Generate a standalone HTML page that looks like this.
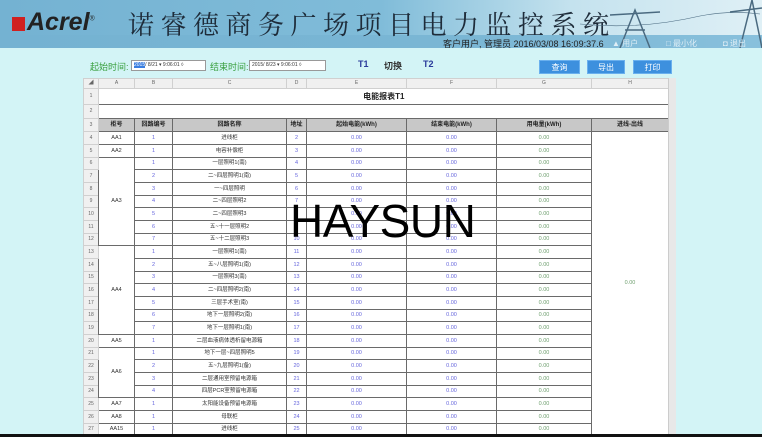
<!DOCTYPE html>
<html><head><meta charset="utf-8"><style>
*{margin:0;padding:0;box-sizing:border-box}
body{width:762px;height:437px;overflow:hidden;background:#d3f4f6;font-family:"Liberation Sans","Noto Sans CJK SC",sans-serif;position:relative}
.hdr{position:absolute;left:0;top:0;width:762px;height:48px;background:linear-gradient(90deg,#74b2d2 0%,#80bcd9 50%,#c4e2ee 75%,#dff0f6 100%)}
.hdr .bot{position:absolute;left:0;top:35px;width:762px;height:13px;background:linear-gradient(90deg,#74b2d2,#7ab6d4 60%,#88c0dc)}
.logo{position:absolute;left:12px;top:8px;font:italic bold 25px "Liberation Sans",sans-serif;color:#222}
.title{position:absolute;left:128px;top:5px;font:26px "Noto Serif CJK SC",serif;color:#1e2c3a;letter-spacing:6.5px;white-space:nowrap}
.user{position:absolute;left:443px;top:37px;font-size:9px;color:#222;white-space:nowrap}
.hl{position:absolute;top:38px;font-size:8px;color:#dfeef6}
.lbl{position:absolute;top:60px;font-size:9px;color:#3aa040}
.inp{position:absolute;top:60px;height:11px;background:#fff;border:1px solid #999;font-size:5px;line-height:9px;color:#333;padding-left:2px}
.t{position:absolute;top:59px;font-size:9px;font-weight:bold;color:#2a3a9a}
.btn{position:absolute;top:60px;height:14px;background:#3d90de;color:#fff;font-size:8px;text-align:center;line-height:14px;border:1px solid #6ab0ee}
.sheet{position:absolute;left:83px;top:78px;width:593px;height:356px;background:#fff;overflow:hidden}
table{border-collapse:collapse;table-layout:fixed;font-size:5.5px;line-height:7px;font-family:"Liberation Sans","Noto Sans CJK SC",sans-serif}
td{text-align:center;overflow:hidden;white-space:nowrap;padding:0;border:1px solid #6a6a6a;color:#333}
td.n{background:#f0f0f0;border:1px solid #d0d0d0;color:#666;font-size:5px}
tr.ch td{background:#f0f0f0;border:1px solid #d0d0d0;color:#666;height:10px;font-size:5px}
tr.h td.c{background:#c8c8c8;font-weight:bold;color:#222;font-size:6px}
tr.a{height:13px}tr.s{height:12px}
.b{color:#6666dd}.g{color:#70a070}
.wm{position:absolute;left:290px;top:194px;font:46px "Liberation Sans",sans-serif;color:#000;letter-spacing:-0.5px}
.sb{position:absolute;left:668px;top:78px;width:8px;height:356px;background:#e8e8e8;border-left:1px solid #ccc}
.blk{position:absolute;left:0;top:434px;width:762px;height:3px;background:#111}
</style></head><body>
<div class="hdr"><div class="bot"></div>
<div class="logo"><span style="display:inline-block;width:13px;height:14px;background:#d02020;vertical-align:-1px;margin-right:2px"></span>Acrel<sup style="font-size:7px;font-style:normal;font-weight:normal">®</sup></div>
<div class="title">诺睿德商务广场项目电力监控系统</div>
<svg style="position:absolute;left:580px;top:0" width="182" height="48"><g stroke="#4a6a80" fill="none" stroke-width="1.5"><path d="M40 48 L55 10 L70 48 M45 30 L65 30 M30 15 L80 12"/><path d="M160 48 L172 0 L182 48 M150 12 L182 8"/><path d="M0 24 Q60 30 120 16 Q150 10 180 14" stroke-width=".6"/></g></svg>
<div class="user">客户用户, 管理员 2016/03/08 16:09:37.6</div>
<div class="hl" style="left:612px">▲ 用户</div><div class="hl" style="left:666px">□ 最小化</div><div class="hl" style="left:723px">◘ 退出</div>
</div>
<div class="lbl" style="left:90px">起始时间:</div>
<div class="inp" style="left:131px;width:75px"><span style="background:#3a7ee0;color:#fff">2015</span>/ 8/21 ▾ 9:06:01 ◊</div>
<div class="lbl" style="left:210px">结束时间:</div>
<div class="inp" style="left:249px;width:77px">2015/ 8/23 ▾ 9:06:01 ◊</div>
<div class="t" style="left:358px">T1</div><div class="t" style="left:384px;color:#333">切换</div><div class="t" style="left:423px">T2</div>
<div class="btn" style="left:539px;width:41px">查询</div><div class="btn" style="left:587px;width:38px">导出</div><div class="btn" style="left:633px;width:39px">打印</div>
<div class="sheet"><table>
<colgroup><col style="width:15px"><col style="width:36px"><col style="width:38px"><col style="width:114px"><col style="width:20px"><col style="width:100px"><col style="width:90px"><col style="width:95px"><col style="width:77px"></colgroup>
<tr class="ch"><td>◢</td><td>A</td><td>B</td><td>C</td><td>D</td><td>E</td><td>F</td><td>G</td><td>H</td></tr>
<tr style="height:16px"><td class="n">1</td><td colspan="8" style="border:none;border-bottom:1px solid #6a6a6a;font-size:8px;font-weight:bold;color:#222">电能报表T1</td></tr>
<tr style="height:14px"><td class="n">2</td><td colspan="8" style="border:none;border-bottom:1px solid #6a6a6a"></td></tr>
<tr class="h" style="height:13px"><td class="n">3</td><td class="c">柜号</td><td class="c">回路编号</td><td class="c">回路名称</td><td class="c">地址</td><td class="c">起始电能(kWh)</td><td class="c">结束电能(kWh)</td><td class="c">用电量(kWh)</td><td class="c">进线-出线</td></tr>
<tr class="a"><td class="n">4</td><td>AA1</td><td class="b">1</td><td>进线柜</td><td class="b">2</td><td class="b">0.00</td><td class="b">0.00</td><td class="g">0.00</td><td rowspan="24" class="g">0.00</td></tr>
<tr class="a"><td class="n">5</td><td>AA2</td><td class="b">1</td><td>电容补偿柜</td><td class="b">3</td><td class="b">0.00</td><td class="b">0.00</td><td class="g">0.00</td></tr>
<tr class="s"><td class="n">6</td><td rowspan="7">AA3</td><td class="b">1</td><td>一层照明1(南)</td><td class="b">4</td><td class="b">0.00</td><td class="b">0.00</td><td class="g">0.00</td></tr>
<tr class="a"><td class="n">7</td><td class="b">2</td><td>二~四层照明1(南)</td><td class="b">5</td><td class="b">0.00</td><td class="b">0.00</td><td class="g">0.00</td></tr>
<tr class="a"><td class="n">8</td><td class="b">3</td><td>一~四层照明</td><td class="b">6</td><td class="b">0.00</td><td class="b">0.00</td><td class="g">0.00</td></tr>
<tr class="s"><td class="n">9</td><td class="b">4</td><td>二~四层照明2</td><td class="b">7</td><td class="b">0.00</td><td class="b">0.00</td><td class="g">0.00</td></tr>
<tr class="a"><td class="n">10</td><td class="b">5</td><td>二~四层照明3</td><td class="b">8</td><td class="b">0.00</td><td class="b">0.00</td><td class="g">0.00</td></tr>
<tr class="a"><td class="n">11</td><td class="b">6</td><td>五~十一层照明2</td><td class="b">9</td><td class="b">0.00</td><td class="b">0.00</td><td class="g">0.00</td></tr>
<tr class="s"><td class="n">12</td><td class="b">7</td><td>五~十二层照明3</td><td class="b">10</td><td class="b">0.00</td><td class="b">0.00</td><td class="g">0.00</td></tr>
<tr class="a"><td class="n">13</td><td rowspan="7">AA4</td><td class="b">1</td><td>一层照明1(南)</td><td class="b">11</td><td class="b">0.00</td><td class="b">0.00</td><td class="g">0.00</td></tr>
<tr class="a"><td class="n">14</td><td class="b">2</td><td>五~八层照明1(南)</td><td class="b">12</td><td class="b">0.00</td><td class="b">0.00</td><td class="g">0.00</td></tr>
<tr class="s"><td class="n">15</td><td class="b">3</td><td>一层照明3(南)</td><td class="b">13</td><td class="b">0.00</td><td class="b">0.00</td><td class="g">0.00</td></tr>
<tr class="a"><td class="n">16</td><td class="b">4</td><td>二~四层照明2(南)</td><td class="b">14</td><td class="b">0.00</td><td class="b">0.00</td><td class="g">0.00</td></tr>
<tr class="a"><td class="n">17</td><td class="b">5</td><td>三层手术室(南)</td><td class="b">15</td><td class="b">0.00</td><td class="b">0.00</td><td class="g">0.00</td></tr>
<tr class="s"><td class="n">18</td><td class="b">6</td><td>地下一层照明2(南)</td><td class="b">16</td><td class="b">0.00</td><td class="b">0.00</td><td class="g">0.00</td></tr>
<tr class="a"><td class="n">19</td><td class="b">7</td><td>地下一层照明1(南)</td><td class="b">17</td><td class="b">0.00</td><td class="b">0.00</td><td class="g">0.00</td></tr>
<tr class="a"><td class="n">20</td><td>AA5</td><td class="b">1</td><td>二层血液病体透析留电源箱</td><td class="b">18</td><td class="b">0.00</td><td class="b">0.00</td><td class="g">0.00</td></tr>
<tr class="s"><td class="n">21</td><td rowspan="4">AA6</td><td class="b">1</td><td>地下一层~四层照明5</td><td class="b">19</td><td class="b">0.00</td><td class="b">0.00</td><td class="g">0.00</td></tr>
<tr class="a"><td class="n">22</td><td class="b">2</td><td>五~九层照明1(备)</td><td class="b">20</td><td class="b">0.00</td><td class="b">0.00</td><td class="g">0.00</td></tr>
<tr class="a"><td class="n">23</td><td class="b">3</td><td>二层通用室预留电源箱</td><td class="b">21</td><td class="b">0.00</td><td class="b">0.00</td><td class="g">0.00</td></tr>
<tr class="s"><td class="n">24</td><td class="b">4</td><td>四层PCR室预留电源箱</td><td class="b">22</td><td class="b">0.00</td><td class="b">0.00</td><td class="g">0.00</td></tr>
<tr class="a"><td class="n">25</td><td>AA7</td><td class="b">1</td><td>太阳能设备预留电源箱</td><td class="b">23</td><td class="b">0.00</td><td class="b">0.00</td><td class="g">0.00</td></tr>
<tr class="a"><td class="n">26</td><td>AA8</td><td class="b">1</td><td>母联柜</td><td class="b">24</td><td class="b">0.00</td><td class="b">0.00</td><td class="g">0.00</td></tr>
<tr class="s"><td class="n">27</td><td>AA15</td><td class="b">1</td><td>进线柜</td><td class="b">25</td><td class="b">0.00</td><td class="b">0.00</td><td class="g">0.00</td></tr>
</table></div>
<div class="sb"></div>
<div class="wm">HAYSUN</div>
<div class="blk"></div>
</body></html>
